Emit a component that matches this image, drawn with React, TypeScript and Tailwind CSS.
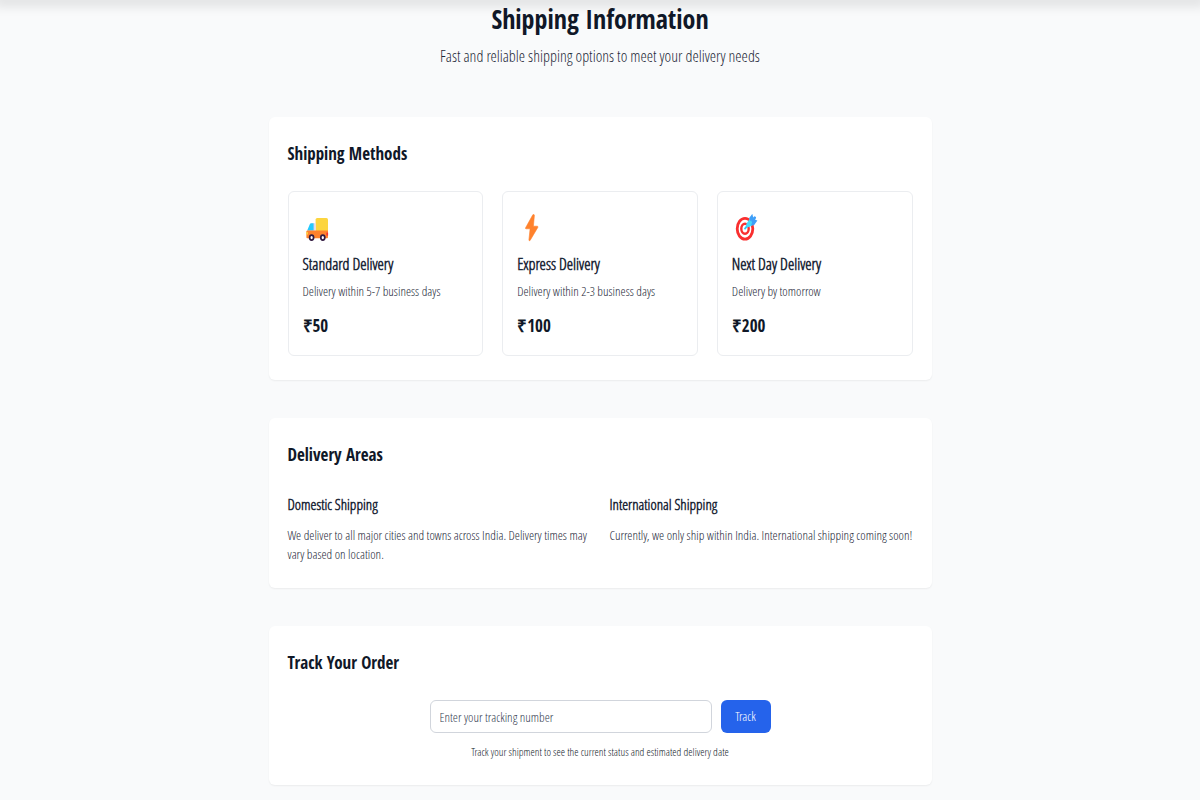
import type { ReactNode } from "react";

function TruckIcon() {
  return (
    <svg viewBox="0 0 24 24" className="mt-1 h-6 w-6" aria-hidden="true">
      <rect x="9.6" y="0" width="12.4" height="17" rx="1.6" fill="#fcd53f" />
      <path d="M4.2 6.4Q4.6 5.2 5.5 5.2H9.6V14H1.6Z" fill="#e1d8ec" />
      <path d="M3.8 6.2Q4.2 5.2 5.2 5.2H7.6V12.6H1.2Z" fill="#26c9fc" />
      <path d="M1 12.6H22V19.2Q22 20.2 21 20.2H1.4Q.4 20.2 .4 19.2V13.4Z" fill="#ff822d" />
      <rect x="0.4" y="14" width="1.6" height="2.6" rx="0.6" fill="#fcd53f" />
      <rect x="20.4" y="14.6" width="1.7" height="3" fill="#f8312f" />
      <ellipse cx="5.6" cy="19.6" rx="2" ry="2.5" fill="#fff" stroke="#321b41" strokeWidth="1.7" />
      <ellipse cx="16.8" cy="19.6" rx="2" ry="2.5" fill="#fff" stroke="#321b41" strokeWidth="1.7" />
    </svg>
  );
}

function BoltIcon() {
  return (
    <svg viewBox="0 0 24 28" className="h-7 w-6" aria-hidden="true">
      <path d="M12.8 .8 5.6 13.8Q5.2 14.8 6.2 14.8H10.1L8.9 26Q9.2 27.4 10.1 26.4L17.8 13.4Q18.2 12.2 17.2 12.2H13.4L14.4 1.2Q14.1 -.2 12.8 .8Z" fill="#ff822d" stroke="#ff822d" strokeWidth="0.6" />
    </svg>
  );
}

function TargetIcon() {
  return (
    <svg viewBox="0 0 24 28" className="h-7 w-6" aria-hidden="true">
      <ellipse cx="10" cy="14.8" rx="7.8" ry="10.4" fill="#fff" stroke="#f92f2f" strokeWidth="2.8" />
      <ellipse cx="10" cy="14.8" rx="3.7" ry="5" fill="#fff" stroke="#f92f2f" strokeWidth="2.4" />
      <path d="m10 14.6 5-6.4" stroke="#26c9fc" strokeWidth="1.8" strokeLinecap="round" />
      <path d="M11.6 9.6 15.2 3.8 18 4.6 20 8 17 11.8 12.4 13.6 10.8 11.8Z" fill="#46d8fa" />
      <path d="M14.2 4.1 17.3 -.2 18.2 3.4 15.4 7.3ZM17 8.6 19.2 5.4 22.4 6.4 19 11.2 16.2 11.2ZM16 6.3 19.2 2.2 21.1 2.9 20.6 5.3 17.3 9Z" fill="#3f9ff8" />
    </svg>
  );
}

const methods = [
  { name: "Standard Delivery", detail: "Delivery within 5-7 business days", price: "₹50", icon: <TruckIcon /> },
  { name: "Express Delivery", detail: "Delivery within 2-3 business days", price: "₹100", icon: <BoltIcon /> },
  { name: "Next Day Delivery", detail: "Delivery by tomorrow", price: "₹200", icon: <TargetIcon /> },
];

const areas = [
  { name: "Domestic Shipping", detail: "We deliver to all major cities and towns across India. Delivery times may vary based on location." },
  { name: "International Shipping", detail: "Currently, we only ship within India. International shipping coming soon!" },
];

const heading = "font-['Open_Sans_Condensed','Open_Sans',sans-serif] font-bold";

function Section({ title, children }: { title: string; children: ReactNode }) {
  return (
    <section className="rounded-md bg-white px-[19px] py-6 shadow-[0_1px_2px_rgba(0,0,0,0.06)]">
      <h2 className={`${heading} mb-6 text-[17px]/[26px] text-gray-900`}>{title}</h2>
      {children}
    </section>
  );
}

export default function App() {
  return (
    <div className="min-h-screen bg-gray-50 font-['Open_Sans_Condensed_Light','Open_Sans',sans-serif]">
      <div className="h-0 shadow-[0_0_12px_6px_rgba(0,0,0,0.11)]" />
      <main className="mx-auto max-w-[663px] pt-px pb-4">
        <header className="mb-[49px] text-center">
          <h1 className={`${heading} mb-[7px] text-[26px]/9 text-gray-900`}>Shipping Information</h1>
          <p className="text-base/6 text-gray-800">Fast and reliable shipping options to meet your delivery needs</p>
        </header>
        <div className="flex flex-col gap-[38px]">
          <Section title="Shipping Methods">
            <div className="grid grid-cols-3 gap-[19px]">
              {methods.map((m) => (
                <article key={m.name} className="rounded-md border border-[#ebedf0] px-3.5 pt-[18px] pb-[15px]">
                  <div className="mb-1.5 flex h-9 items-center pl-[3px]">{m.icon}</div>
                  <h3 className="mb-[5px] text-base/6 font-semibold text-gray-800">{m.name}</h3>
                  <p className="mb-[11px] text-[13px]/5 text-gray-800">{m.detail}</p>
                  <p className={`${heading} text-[17px]/7 text-gray-900`}>{m.price}</p>
                </article>
              ))}
            </div>
          </Section>
          <Section title="Delivery Areas">
            <div className="grid grid-cols-2 gap-[19px]">
              {areas.map((a) => (
                <div key={a.name}>
                  <h3 className="mb-2.5 text-[15px]/6 font-semibold text-gray-800">{a.name}</h3>
                  <p className="text-[13px]/[19px] text-gray-800">{a.detail}</p>
                </div>
              ))}
            </div>
          </Section>
          <Section title="Track Your Order">
            <form className="mx-auto flex max-w-[341px] gap-[9px]" onSubmit={(e) => e.preventDefault()}>
              <input
                type="text"
                aria-label="Tracking number"
                placeholder="Enter your tracking number"
                className="h-[33px] min-w-0 flex-1 rounded-md border border-gray-300 px-[9px] text-[13px] placeholder:text-gray-700"
              />
              <button type="submit" className="w-[50px] rounded-md bg-[#2563eb] text-[13px] text-white">Track</button>
            </form>
            <p className="mt-2.5 text-center text-[11px]/[18px] text-gray-900">
              Track your shipment to see the current status and estimated delivery date
            </p>
          </Section>
        </div>
      </main>
    </div>
  );
}
